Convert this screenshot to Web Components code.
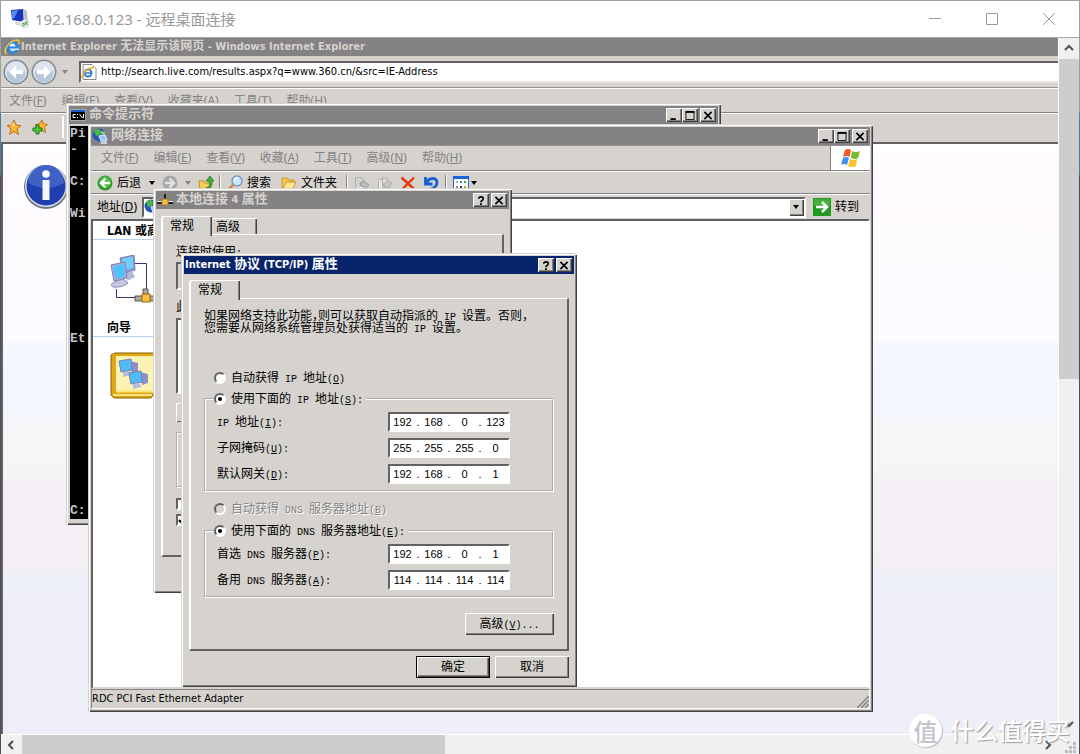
<!DOCTYPE html>
<html lang="zh-CN">
<head>
<meta charset="utf-8">
<meta name="viewport" content="width=device-width, initial-scale=1">
<title>192.168.0.123 - 远程桌面连接</title>
<style>
  body { margin: 0; font: 12px/16px "Noto Sans", "Noto Sans CJK SC", sans-serif; color: #000; }
</style>
</head>
<body>
<remote-desktop></remote-desktop>
<script>
const ICONS = {
  rdp: ['0 0 20 20', '<path d="M1 1l12-1 1 13-12-2z" fill="#1737b8"/><path d="M2 2l6-1-4 9-2-1z" fill="#5a8df0"/><path d="M13 0l4 2 1 12-4-1z" fill="#b9bec6"/><path d="M5 13l8 1 1 3-8-1z" fill="#d4d8de"/><circle cx="15" cy="15" r="4.500" fill="#e3e6e3"/><path d="M12.500 14l2 1.500-2 1.500M17.500 12.500l-2 1.500 2 1.500" stroke="#4da04a" fill="none" stroke-width="1.300"/>'],
  ie: ['0 0 16 16', '<circle cx="8.500" cy="8.500" r="6.500" fill="#2a86e0"/><path d="M5.500 7.500a3 3 0 016 0z" fill="#d8ecff"/><path d="M5.500 9.500h9.500v1.500h-3.500q-4 3-6-1.500z" fill="#d8ecff"/><path d="M2.500 15C-1.500 12 5 1 13.500 1c2 .2 2 2 .8 4" fill="none" stroke="#f6c22c" stroke-width="1.600"/>'],
  page: ['0 0 16 16', '<path d="M2 .5h9l4 4v11H2z" fill="#fff" stroke="#8a8a8a"/><circle cx="7" cy="9" r="3.500" fill="none" stroke="#2f7fd8" stroke-width="2"/><path d="M4 9h7" stroke="#2f7fd8" stroke-width="1.500"/><path d="M1 14C1 9 7 3 13 4" fill="none" stroke="#f0b020" stroke-width="1.500"/>'],
  left: ['0 0 26 26', '<circle cx="13" cy="13" r="12.500" fill="#7e8894"/><circle cx="13" cy="13" r="11" fill="#dfe4ea"/><circle cx="13" cy="14" r="9.500" fill="#b9c9dd"/><path d="M4 12a9 8 0 0118 0q-9 4-18 0" fill="#dce5f0"/><path d="M13 6.500l-7 6.500 7 6.500v-4.500h7v-4h-7z" fill="#fff"/>'],
  right: ['0 0 26 26', '<circle cx="13" cy="13" r="12.500" fill="#7e8894"/><circle cx="13" cy="13" r="11" fill="#dfe4ea"/><circle cx="13" cy="14" r="9.500" fill="#b9c9dd"/><path d="M4 12a9 8 0 0118 0q-9 4-18 0" fill="#dce5f0"/><path d="M13 6.500l7 6.500-7 6.500v-4.500H6v-4h7z" fill="#fff"/>'],
  star: ['0 0 16 16', '<path d="M8 1l2 5 5 .500-4 3.500 1.500 5.500L8 12.500 3.500 15.500 5 10 1 6.500 6 6z" fill="#ffb52b" stroke="#b8701a"/><path d="M8 3l1 4H5z" fill="#ffe08a"/>'],
  addstar: ['0 0 16 16', '<path d="M10 1l1.500 4 4 .500-3 3 1 5L9 11 5 12l1-4-3-2 4-1z" fill="#ffb52b" stroke="#b8701a"/><path d="M4 6h3v3h3v3H7v3H4v-3H1V9h3z" fill="#4cc63c" stroke="#20751a"/>'],
  cmd: ['0 0 16 14', '<path d="M0 1h16v12H0z" fill="#a8a8a8"/><path d="M1 2h14v2H1z" fill="#1c58c8"/><path d="M1 4h14v8H1z"/><path d="M5.500 6.500H3v3h2.500M7.500 6v1M7.500 9v1M9.500 6l3 4M13.500 6v4" stroke="#fff" fill="none"/>'],
  globe: ['0 0 16 16', '<circle cx="7" cy="7" r="6.500" fill="#2458b8"/><path d="M2 3q4-4 7 0l-1 4-4 1z" fill="#49b842"/><path d="M9 3l4 1v3l-4-1z" fill="#8ad070"/><path d="M7 8l6-1 2 5-6 1z" fill="#8fc8f5" stroke="#eef"/><path d="M8 14l7-1v3H9z" fill="#c9d3e8"/>'],
  lan: ['0 0 16 12', '<path d="M0 8h16v2H0z" fill="#222"/><path d="M0 7h16v1H0z" fill="#eee"/><path d="M7 0h2v6H7z" fill="#222"/><path d="M5 5h6v6H5z" fill="#f5c04c" stroke="#a87a14"/>'],
  back: ['0 0 16 16', '<circle cx="8" cy="8" r="7.500" fill="#2e9a2c"/><circle cx="8" cy="7" r="6" fill="#4dbb45"/><path d="M8.500 3.500L4 8l4.500 4.500M4 8h9" stroke="#fff" stroke-width="2.300" fill="none"/>'],
  fwd: ['0 0 16 16', '<circle cx="8" cy="8" r="7.500" fill="#a9a9a9"/><path d="M7.500 3.500L12 8l-4.500 4.500M12 8H3" stroke="#e4e4e4" stroke-width="2.300" fill="none"/>'],
  up: ['0 0 16 16', '<path d="M1 6h5l1 2h6v7H2z" fill="#f4cc58" stroke="#c48c1c"/><path d="M8 13q5-1 3-7h-3l4-5 4 5h-2q1 8-6 7z" fill="#3cb034" stroke="#1c701c" stroke-width=".7"/>'],
  search: ['0 0 16 16', '<path d="M1 15l5-5" stroke="#d98236" stroke-width="2.500"/><circle cx="10" cy="6" r="5" fill="#c4e8fb" stroke="#7897c8" stroke-width="1.500"/><path d="M7 5q2-3 4-2" stroke="#fff" fill="none" stroke-width="1.500"/>'],
  folder: ['0 0 16 16', '<path d="M1 3h5l1 2h6v3H5l-3 6H1z" fill="#f6c94f" stroke="#cf9526"/><path d="M5 7h10l-3 7H2z" fill="#fde58e" stroke="#cf9526"/>'],
  move: ['0 0 16 16', '<path d="M1.500 2.500h6l3 3v9h-9z" fill="#d0d0d0" stroke="#b0b0b0"/><path d="M3 12h6v2H3z" fill="#eee"/><path d="M6 8q3 1 3-2l6 4-5 5v-3q-4 0-4-4z" fill="#bdbdbd" stroke="#999"/>'],
  copy: ['0 0 16 16', '<path d="M1.500 4.500h5l2 2v8h-7z" fill="#e6e6e6" stroke="#b0b0b0"/><path d="M5 3h4l3 3v7H6z" fill="#d8d8d8" stroke="#aaa"/><path d="M6 9q3 1 3-2l2-2 4 3-4 6-2-2q-3 0-3-3z" fill="#c4c4c4" stroke="#a0a0a0" stroke-width=".7"/>'],
  del: ['0 0 16 16', '<path d="M1.500 2.500l13 12M14 2.500L2 14.500" stroke="#e8380d" stroke-width="2.400"/>'],
  undo: ['0 0 16 16', '<path d="M2.500 2v7h7M3 8.500C6 2 14 2 14 7.500c0 4-3 5.500-6 6.500" fill="none" stroke="#1a5fd0" stroke-width="2.800"/>'],
  views: ['0 0 16 14', '<path d="M0 0h16v14H0z" fill="#1a63d8"/><path d="M1 3h14v10H1z" fill="#fff"/><path d="M3 5h2v2H3z" fill="#aaa"/><path d="M3 10h2v2H3z" fill="#d65"/><path d="M7 5h2v2H7z" fill="#47b"/><path d="M7 10h2v2H7z" fill="#228"/><path d="M11 5h2v2h-2z" fill="#2a2"/><path d="M11 10h2v2h-2z" fill="#ba2"/>'],
  go: ['0 0 18 18', '<path d="M0 0h18v18H0z" fill="#229a22"/><path d="M1 1h16v7H1z" fill="#45b03e"/><path d="M9 4l5 5-5 5M14 9H3" stroke="#fff" stroke-width="2.500" fill="none"/>'],
  down: ['0 0 6 4', '<path d="M0 0h6L3 4z" fill="currentColor"/>'],
  flag: ['0 0 20 20', '<path d="M4 2q3-2 6 0L8.500 9Q6 7 2 9z" fill="#f05a28"/><path d="M11 3q4 2 8 0l-2 7q-3 2-7 0z" fill="#7cbb2c"/><path d="M2 10q3-2 6 0l-2 7q-3-2-6 0z" fill="#3f8ef0"/><path d="M9 11q4 2 7 0l-1 7q-4 2-8 0z" fill="#fcc42c"/>'],
  info: ['0 0 46 48', '<circle cx="23" cy="24" r="22" fill="#6f7686"/><circle cx="23" cy="23" r="21" fill="#d4dae8"/><circle cx="23" cy="23" r="19.500" fill="#1f3fae"/><path d="M5 20a18 18 0 0136 0q-18 10-36 0" fill="#3f60c4"/><circle cx="23" cy="11" r="3.800" fill="#fff"/><path d="M19.500 17h7v20h-7z" fill="#f4f6fb"/>'],
  netlan: ['0 0 44 48', '<path d="M25 8.500h11.500V35M6.500 34v8.500H26" stroke="#3d2f7a" fill="none"/><path d="M10 3l14-3 1 15-12 4z" fill="#8f94d6" stroke="#7c7fae"/><path d="M12 4l11-2.500v11.500l-10 3z" fill="#6fd0fb"/><path d="M17 18l5-2 3 6-8 4z" fill="#b6b8dc"/><path d="M1 10l14-3 2 16-13 3z" fill="#a8ace0" stroke="#7c7fae"/><path d="M3 11.500l11-2.500 1 12-9 3z" fill="#4fc0f8"/><path d="M7 26l6-2 5 4q-6 5-15 4-5-3 4-6z" fill="#c6c8e4" stroke="#8b8db0"/><path d="M33 34h5v7h6v5H25v-5h8z" fill="#a9a998" stroke="#55554a"/><path d="M32 39h8v8h-8z" fill="#fbbf3b" stroke="#94690f"/>'],
  wizard: ['0 0 44 48', '<path d="M1 3l4-2h39v40l-3 5H4l-3-3z" fill="#e0a818" stroke="#8a6208"/><path d="M6 4h38v35H6z" fill="#fdf3b0"/><path d="M6 39.500h38M3 43h39" stroke="#fbe27a" stroke-width="2"/><path d="M20 9l8 2v9l-6 2z" fill="#8d90c8"/><path d="M9 9l12-2 1 11-11 2z" fill="#50bdf5" stroke="#777db8"/><path d="M13 20l6-1 3 4-9 2z" fill="#b9bcdc"/><path d="M30 20l8 2v9l-6 2z" fill="#8d90c8"/><path d="M19 21l12-2 1 11-11 2z" fill="#50bdf5" stroke="#777db8"/><path d="M23 32l6-1 3 4-9 2z" fill="#b9bcdc"/>'],
  grip: ['0 0 12 12', '<path d="M0 12L12 0M4 12l8-8M8 12l4-4" stroke="#848284" stroke-width="1.500"/>'],
  min: ['0 0 12 12', '<path d="M0 5.500h12" stroke="#999"/>'],
  max: ['0 0 12 12', '<path d="M.5.5h11v11H.5z" stroke="#999" fill="none"/>'],
  close: ['0 0 12 12', '<path d="M0 0l12 12M12 0L0 12" stroke="#999"/>'],
  bmin: ['0 0 10 10', '<path d="M1 8h6v2H1z"/>'],
  bmax: ['0 0 10 10', '<path d="M.5 1h9v8.500h-9z" fill="none" stroke="#000"/><path d="M0 0h10v2H0z"/>'],
  bclose: ['0 0 10 10', '<path d="M1 1l8 8M9 1L1 9" stroke="#000" stroke-width="1.800"/>'],
  bhelp: ['0 0 10 10', '<path d="M2.500 3q0-2 2.500-2t2.500 2Q7.500 4.500 5 6v1" fill="none" stroke="#000" stroke-width="1.800"/><path d="M4 8h2v2H4z"/>'],
  chev: ['0 0 10 10', '<path d="M1 7l4-4 4 4" fill="none" stroke="#505050" stroke-width="2"/>'],
  dots: ['0 0 11 11', '<path d="M8 0h3v3H8zM4 4h3v3H4zM8 4h3v3H8zM0 8h3v3H0zM4 8h3v3H4zM8 8h3v3H8z" fill="#bdbdbd"/>']
};

const RESET = `
  *, *::before { box-sizing: border-box; }
  button { font: inherit; color: inherit; background: none; border: 0; padding: 0; margin: 0; display: flex; align-items: center; justify-content: center; white-space: nowrap; }
  input { font: inherit; color: inherit; border: 0; padding: 0; margin: 0; outline: 0; min-width: 0; background: none; }
  .l { font: 10px/1px "Liberation Mono", monospace; white-space: pre; }
`;
const CAPTION = 'bold 11px/16px "DejaVu Sans Condensed", "Noto Sans", "Noto Sans CJK SC", sans-serif';
const DIALOG = '11px/16px "DejaVu Sans Condensed", "Noto Sans", sans-serif';

/* Song-style labels: ideographs at 12px, ASCII runs in a 6px-wide monospace. */
const song = html => html.split(/(<[^>]+>)/).map(part =>
  part.startsWith('<') ? part : part.replace(/[\x20-\x7e]+/g, '<span class="l">$&</span>')).join('');
const keyed = text => song(text.replace(/\((\w)\)/, '(<u>$1</u>)'));
/* Captions set their ideographs larger than the Latin text. */
const caption = text => text.replace(/[\u4e00-\u9fff]+/g, '<span class="han">$&</span>');

function define(name, css, markup) {
  customElements.define(name, class extends HTMLElement {
    constructor() {
      super();
      this.attachShadow({ mode: 'open' });
    }
    connectedCallback() {
      if (this.shadowRoot.childNodes.length) return;
      const t = document.createElement('template');
      t.innerHTML = `<style>${RESET}${css}</style>` + (typeof markup === 'function' ? markup(this) : markup);
      this.shadowRoot.append(t.content.cloneNode(true));
    }
  });
}

define('ui-icon', `
  :host { display: block; flex: none; width: 16px; height: 16px; }
  svg { display: block; width: 100%; height: 100%; }
`, el => {
  const [box, body] = ICONS[el.getAttribute('name')];
  return `<svg viewBox="${box}" aria-hidden="true">${body}</svg>`;
});

define('menu-bar', `
  :host { display: flex; align-items: center; color: #848284; }
  nav { display: flex; gap: 15px; }
`, el => `<nav>${el.getAttribute('items').split(' ').map(i => {
  const [t, k] = i.split(':');
  return `<button type="button"><span>${t}(<u>${k}</u>)</span></button>`;
}).join('')}</nav>`);

define('classic-window', `
  :host { position: absolute; display: flex; flex-direction: column; padding: 3px; background: #d6d3ce;
    box-shadow: inset 1px 1px #d6d3ce, inset 2px 2px #fff, inset -1px -1px #424142, inset -2px -2px #848284; }
  header { display: flex; align-items: center; flex: none; height: 18px; padding: 0 2px 0 1px; gap: 3px; background: #848284; color: #d6d3ce; }
  :host([active]) header { background: #08246b; color: #fff; }
  h2 { flex: 1; margin: 0; font: ${CAPTION}; white-space: nowrap; }
  .han { font-size: 13px; line-height: 1px; }
  .buttons { display: flex; }
  .buttons button { width: 16px; height: 14px; color: #000; background: #d6d3ce; box-shadow: inset 1px 1px #fff, inset -1px -1px #424142, inset -2px -2px #848284; }
  .buttons button:last-child { margin-left: 2px; }
  .buttons ui-icon { width: 10px; height: 9px; }
  ::slotted(*) { min-width: 0; }
`, el => {
  const dialog = el.hasAttribute('dialog');
  const b = (n, t) => `<button type="button" aria-label="${t}"><ui-icon name="${n}"></ui-icon></button>`;
  return `<header><slot name="icon"></slot><h2>${caption(el.getAttribute('caption'))}</h2><div class="buttons">
    ${dialog ? b('bhelp', '帮助') : b('bmin', '最小化') + b('bmax', '最大化')}${b('bclose', '关闭')}</div></header><slot></slot>`;
});

define('tab-sheet', `
  :host { display: flex; flex-direction: column; }
  .tabs { display: flex; align-items: flex-end; height: 19px; flex: none; }
  button { height: 16px; padding: 0 17px 0 4px; border-top: 1px solid #fff; box-shadow: inset -1px 0 #424142, inset -2px 0 #848284; }
  button:first-child { height: 20px; padding: 0 18px 2px 7px; margin-bottom: -2px; background: #d6d3ce; border-left: 2px solid #fff; border-radius: 3px 0 0 0; position: relative; }
  .sheet { flex: 1; border: 1px solid #fff; border-left-width: 2px; border-right: 2px solid #636163; border-bottom: 2px solid #636163; padding: 11px 13px 12px; }
`, el => `<div class="tabs">${el.getAttribute('tabs').split(' ').map(t => `<button type="button">${t}</button>`).join('')}</div>
  <div class="sheet"><slot></slot></div>`);

define('radio-option', `
  :host { display: flex; align-items: center; height: 16px; }
  input { appearance: none; flex: none; width: 12px; height: 12px; border-radius: 50%; background: #fff; border: 2px solid; border-color: #636163 #fff #fff #636163; display: grid; place-items: center; }
  input:checked::before { content: ""; width: 4px; height: 4px; border-radius: 50%; background: #000; }
  input:disabled { background: #d6d3ce; }
  label { padding-left: 5px; white-space: nowrap; }
  :host([off]) { color: #848284; text-shadow: 1px 1px #fff; }
`, el => `<input type="radio" id="r" ${el.hasAttribute('on') ? 'checked' : ''} ${el.hasAttribute('off') ? 'disabled' : ''}>
  <label for="r">${keyed(el.getAttribute('text'))}</label>`);

define('ip-row', `
  :host { display: flex; align-items: center; height: 26px; }
  label { width: 171px; white-space: nowrap; }
  .field { display: flex; align-items: center; width: 122px; height: 20px; background: #fff; border: 2px solid; border-color: #636163 #fff #fff #636163; font: 11px/14px "Liberation Sans", sans-serif; }
  input { flex: 1; width: 0; text-align: center; }
  .dot { width: 6px; text-align: center; }
`, el => `<label for="a">${keyed(el.getAttribute('text'))}</label>
  <div class="field">${el.getAttribute('ip').split('.').map((v, i) => `<input ${i ? '' : 'id="a"'} aria-label="${v}" value="${v}">`).join('<span class="dot">.</span>')}</div>`);

define('push-button', `
  :host { display: block; }
  button { width: 100%; height: 22px; background: #d6d3ce; box-shadow: inset 1px 1px #fff, inset -1px -1px #424142, inset -2px -2px #848284; }
  :host([default]) button { border: 1px solid #000; }
`, el => `<button type="button"><span>${keyed(el.getAttribute('text'))}</span></button>`);

define('tcpip-form', `
  :host { flex: 1; display: flex; flex-direction: column; padding: 5px 5px 6px; }
  tab-sheet { flex: 1; }
  p { margin: 0 0 36px; line-height: 12px; white-space: nowrap; }
  .half { font-weight: 400; font-feature-settings: "halt"; }
  radio-option.free { margin: 0 10px; }
  fieldset { margin: 5px 0 9px; padding: 2px 8px 3px; border: 2px groove #fff; min-width: 0; }
  fieldset + radio-option + fieldset { margin: 6px 0 15px; }
  legend { padding: 0 3px 0 0; }
  fieldset ip-row { padding-left: 3px; }
  .adv { width: 89px; margin-left: auto; }
  footer { display: flex; justify-content: flex-end; gap: 5px; padding-top: 5px; }
  footer push-button { width: 74px; }
`, `
  <tab-sheet tabs="常规">
    <p>${song('如果网络支持此功能<b class="half">，</b>则可以获取自动指派的 IP 设置。否则，')}<br>${song('您需要从网络系统管理员处获得适当的 IP 设置。')}</p>
    <radio-option class="free" text="自动获得 IP 地址(O)"></radio-option>
    <fieldset>
      <legend><radio-option on text="使用下面的 IP 地址(S):"></radio-option></legend>
      <ip-row text="IP 地址(I):" ip="192.168.0.123"></ip-row>
      <ip-row text="子网掩码(U):" ip="255.255.255.0"></ip-row>
      <ip-row text="默认网关(D):" ip="192.168.0.1"></ip-row>
    </fieldset>
    <radio-option class="free" off text="自动获得 DNS 服务器地址(B)"></radio-option>
    <fieldset>
      <legend><radio-option on text="使用下面的 DNS 服务器地址(E):"></radio-option></legend>
      <ip-row text="首选 DNS 服务器(P):" ip="192.168.0.1"></ip-row>
      <ip-row text="备用 DNS 服务器(A):" ip="114.114.114.114"></ip-row>
    </fieldset>
    <push-button class="adv" text="高级(V)..."></push-button>
  </tab-sheet>
  <footer><push-button default text="确定"></push-button><push-button text="取消"></push-button></footer>
`);

define('connection-form', `
  :host { flex: 1; display: flex; flex-direction: column; padding: 6px 5px 33px; }
  tab-sheet { flex: 1; }
  .t { line-height: 12px; }
  .well { border: 2px solid; border-color: #636163 #fff #fff #636163; }
  .adapter { height: 28px; margin: 4px 0 11px; }
  .list { height: 76px; margin: 5px 0 9px; background: #fff; }
  .btn { width: 90px; height: 19px; box-shadow: inset 1px 1px #fff, inset -1px -1px #636163; }
  fieldset { height: 56px; margin: 10px 0 10px; border: 2px groove #fff; }
  input { appearance: none; display: block; width: 12px; height: 12px; margin-bottom: 4px; background: #fff; border: 2px solid; border-color: #636163 #fff #fff #636163; }
  input:checked::before { content: ""; display: block; width: 4px; height: 7px; margin: 0 2px; border: solid #000; border-width: 0 2px 2px 0; rotate: 40deg; }
`, `
  <tab-sheet tabs="常规 高级">
    <div class="t">${song('连接时使用:')}</div>
    <div class="well adapter"></div>
    <div class="t">此</div>
    <div class="well list"></div>
    <div class="btn"></div>
    <fieldset></fieldset>
    <input type="checkbox" aria-label="图标"><input type="checkbox" checked aria-label="通知">
  </tab-sheet>
`);

define('network-folder', `
  :host { flex: 1; display: flex; flex-direction: column; }
  .row { display: flex; align-items: center; flex: none; border-bottom: 1px solid #848284; box-shadow: 0 1px #fff; margin-bottom: 1px; }
  .menu { height: 26px; border-top: 1px solid #949294; padding-left: 10px; justify-content: space-between; }
  .logo { align-self: stretch; width: 40px; display: grid; place-items: center; background: #fff; border-left: 1px solid #848284; }
  .logo ui-icon { width: 20px; height: 20px; }
  .tools { height: 22px; padding-left: 6px; }
  .tools button { gap: 4px; }
  .drop { width: 6px; height: 4px; }
  .d1 { margin: 0 7px 0 8px; }
  .d2 { margin: 0 7px; color: #848284; }
  .d3 { margin-left: 2px; }
  .sep { width: 2px; height: 16px; border-left: 1px solid #848284; border-right: 1px solid #fff; margin: 0 6px 0 5px; }
  .tools button + button { margin: 0 4px 0 10px; }
  .mid { margin: 0 7px; }
  .undo { margin: 0 1px 0 7px; }
  .address { display: flex; align-items: center; height: 24px; padding: 0 11px 0 6px; flex: none; }
  .combo { flex: 1; display: flex; align-items: center; height: 21px; margin: 0 7px 0 5px; background: #fff; border: 2px solid; border-color: #636163 #fff #fff #636163; }
  .combo input { flex: 1; }
  .combo button { width: 15px; height: 17px; background: #d6d3ce; box-shadow: inset 1px 1px #fff, inset -1px -1px #424142, inset -2px -2px #848284; }
  .go { gap: 4px; }
  .go ui-icon { width: 18px; height: 18px; }
  main { flex: 1; background: #fff; border: 2px solid; border-color: #636163 #fff #d6d3ce #636163; padding-top: 2px; }
  section { width: 180px; height: 97px; }
  h3 { margin: 0 0 15px; height: 17px; padding: 0 14px; font: bold 12px/16px "DejaVu Sans Condensed", "Noto Sans CJK SC", sans-serif; border-bottom: 1px solid #b5cff0; }
  main ui-icon { width: 44px; height: 48px; margin-left: 17px; }
  footer { display: flex; align-items: center; justify-content: space-between; flex: none; height: 20px; border: 1px solid #848284; border-right-color: #fff; border-bottom-color: #fff; font: ${DIALOG}; }
  footer ui-icon { width: 12px; height: 12px; align-self: flex-end; }
`, `
  <div class="row menu"><menu-bar items="文件:F 编辑:E 查看:V 收藏:A 工具:T 高级:N 帮助:H"></menu-bar><div class="logo"><ui-icon name="flag"></ui-icon></div></div>
  <div class="row tools">
    <button type="button"><ui-icon name="back"></ui-icon>后退</button>
    <ui-icon class="drop d1" name="down"></ui-icon>
    <ui-icon name="fwd"></ui-icon>
    <ui-icon class="drop d2" name="down"></ui-icon>
    <ui-icon name="up"></ui-icon><i class="sep"></i>
    <button type="button"><ui-icon name="search"></ui-icon>搜索</button>
    <button type="button"><ui-icon name="folder"></ui-icon>文件夹</button>
    <i class="sep"></i>
    <ui-icon name="move"></ui-icon><ui-icon class="mid" name="copy"></ui-icon>
    <ui-icon name="del"></ui-icon><ui-icon class="undo" name="undo"></ui-icon>
    <i class="sep"></i><ui-icon name="views"></ui-icon>
    <ui-icon class="drop d3" name="down"></ui-icon>
  </div>
  <div class="address"><label for="addr">地址(<u>D</u>)</label>
    <div class="combo"><ui-icon name="globe"></ui-icon><input id="addr"><button type="button" aria-label="展开"><ui-icon class="drop" name="down"></ui-icon></button></div>
    <button type="button" class="go"><ui-icon name="go"></ui-icon>转到</button></div>
  <main>
    <section><h3>LAN 或高</h3><ui-icon name="netlan"></ui-icon></section>
    <section><h3>向导</h3><ui-icon name="wizard"></ui-icon></section>
  </main>
  <footer>RDC PCI Fast Ethernet Adapter<ui-icon name="grip"></ui-icon></footer>
`);

define('console-screen', `
  :host { flex: 1; display: block; margin: 2px 1px 3px; background: #000; color: #c6c3c6; font: bold 13px/16px "Liberation Mono", monospace; }
  pre { margin: 0; font: inherit; }
  pre:first-child { padding-top: 2px; }
  .gap { height: 16px; } .wide { height: 109px; } .last { height: 156px; }
`, `<pre>Pi</pre><pre>-</pre><div class="gap"></div><pre>C:</pre><div class="gap"></div><pre>Wi</pre><div class="wide"></div><pre>Et</pre><div class="last"></div><pre>C:</pre>`);

define('browser-window', `
  :host { display: flex; flex-direction: column; background: #d6d3ce; }
  header { display: flex; align-items: center; gap: 1px; height: 18px; padding-left: 3px; background: #848284; color: #d6d3ce; }
  h1 { margin: 0; font: ${CAPTION}; white-space: nowrap; }
  .han { font-size: 12px; line-height: 1px; }
  .nav { display: flex; align-items: center; height: 32px; padding-left: 2px; border-bottom: 1px solid #949294; box-shadow: 0 1px #fff; }
  .nav button ui-icon { width: 26px; height: 26px; margin-right: 2px; }
  .drop { width: 8px; height: 4px; color: #848284; margin: 0 10px 0 2px; }
  .url { flex: 1; display: flex; align-items: center; gap: 4px; height: 22px; background: #fff; border: 2px solid #636163; border-right: 0; border-bottom-color: #e7e3de; }
  .url input { flex: 1; font: ${DIALOG}; }
  menu-bar { height: 24px; margin-top: 1px; padding-left: 8px; border-bottom: 1px solid #848284; box-shadow: 0 1px #fff; }
  .fav { display: flex; align-items: center; gap: 10px; height: 29px; padding: 0 5px 2px; }
  .fav i { width: 2px; height: 22px; margin-left: 4px; background: #fff; }
  article { flex: 1; padding: 19px 20px; border: 2px solid #636163; border-width: 2px 0 0 2px;
    background: linear-gradient(#fff 8px, #fffbff 10px, #fdfbff 196px, #f8f8fb 199px, #f5f7ff 203px, #f4f6fe 266px, #f6f6f6 290px, #f5f5f5 330px, #f6f1f6 334px, #f4eff4 420px, #ecf0f6 430px, #eeeef8 460px); }
  article ui-icon { width: 46px; height: 48px; }
`, `
  <header><ui-icon name="ie"></ui-icon><h1>${caption('Internet Explorer 无法显示该网页 - Windows Internet Explorer')}</h1></header>
  <div class="nav"><button type="button" aria-label="后退"><ui-icon name="left"></ui-icon></button><button type="button" aria-label="前进"><ui-icon name="right"></ui-icon></button><ui-icon class="drop" name="down"></ui-icon>
    <div class="url"><ui-icon name="page"></ui-icon><input aria-label="地址" value="http://search.live.com/results.aspx?q=www.360.cn/&amp;src=IE-Address"></div></div>
  <menu-bar items="文件:F 编辑:E 查看:V 收藏夹:A 工具:T 帮助:H"></menu-bar>
  <div class="fav"><ui-icon name="star"></ui-icon><ui-icon name="addstar"></ui-icon><i></i></div>
  <article><ui-icon name="info"></ui-icon></article>
`);

define('scroll-strip', `
  :host { display: flex; background: #f0f0f0; }
  :host([vertical]) { flex-direction: column; border-left: 1px solid #fff; }
  :host(:not([vertical])) { border-top: 1px solid #fff; }
  button { flex: none; width: 20px; height: 20px; }
  .thumb { background: #cdcdcd; flex: none; }
  :host([vertical]) .thumb { height: 46%; margin-top: 1px; }
  :host(:not([vertical])) .thumb { width: 40%; margin-left: 1px; }
  .rest { flex: 1; }
  ui-icon { width: 10px; height: 10px; }
  .w { rotate: -90deg; } .e { rotate: 90deg; } .s { rotate: 180deg; }
`, el => {
  const v = el.hasAttribute('vertical');
  return `<button type="button" aria-label="${v ? '上' : '左'}"><ui-icon class="${v ? '' : 'w'}" name="chev"></ui-icon></button><div class="thumb"></div><div class="rest"></div>
    <button type="button" aria-label="${v ? '下' : '右'}"><ui-icon class="${v ? 's' : 'e'}" name="chev"></ui-icon></button>`;
});

define('water-mark', `
  :host { position: absolute; right: 10px; bottom: 9px; display: flex; align-items: center; gap: 8px; color: #fff; font: 500 24px/34px "Noto Sans CJK SC", sans-serif; text-shadow: 1px 1px 1px #999; pointer-events: none; }
  b { display: grid; place-items: center; width: 33px; height: 33px; border-radius: 50%; background: #fff; color: #c4c4cc; font-size: 24px; font-weight: 500; text-shadow: none; box-shadow: 1px 1px 1px #bbb; }
`, `<b>值</b><span>什么值得买</span>`);

define('remote-desktop', `
  :host { position: relative; display: flex; flex-direction: column; min-height: 100vh; padding: 1px; background: linear-gradient(#a0a0a0 112px, #4f7d9c 113px, #4f7d9c 174px, #4a4f57 176px); }
  .title { display: flex; align-items: center; flex: none; height: 36px; padding: 0 24px 0 9px; gap: 5px; background: #fff; color: #999; font-size: 15px; line-height: 20px; }
  .title > ui-icon { width: 20px; height: 20px; }
  .title span { flex: 1; }
  .title div { display: flex; gap: 45px; }
  .title button ui-icon { width: 12px; height: 12px; }
  .view { flex: 1; display: grid; grid-template-columns: 1fr 21px; grid-template-rows: 1fr 21px; border-top: 1px solid #a8a8a8; background: #f0f0f0; }
  .desk { position: relative; display: flex; overflow: hidden; }
  browser-window { flex: 1; min-width: 0; }
  .cmd { left: 65px; top: 65px; width: 655px; height: 422px; }
  .net { left: 87px; top: 86px; width: 785px; height: 588px; }
  .con { left: 152px; top: 150px; width: 359px; height: 405px; }
  .tcp { left: 180px; top: 215px; width: 396px; height: 434px; }
  .lan { height: 12px; }
  .corner { width: 11px; height: 11px; place-self: end; margin: 0 3px 2px 0; }
`, `
  <div class="title"><ui-icon name="rdp"></ui-icon><span>192.168.0.123 - 远程桌面连接</span>
    <div><button type="button" aria-label="最小化"><ui-icon name="min"></ui-icon></button><button type="button" aria-label="最大化"><ui-icon name="max"></ui-icon></button><button type="button" aria-label="关闭"><ui-icon name="close"></ui-icon></button></div></div>
  <div class="view">
    <div class="desk">
      <browser-window></browser-window>
      <classic-window class="cmd" caption="命令提示符"><ui-icon slot="icon" name="cmd"></ui-icon><console-screen></console-screen></classic-window>
      <classic-window class="net" caption="网络连接"><ui-icon slot="icon" name="globe"></ui-icon><network-folder></network-folder></classic-window>
      <classic-window class="con" dialog caption="本地连接 4 属性"><ui-icon slot="icon" class="lan" name="lan"></ui-icon><connection-form></connection-form></classic-window>
      <classic-window class="tcp" dialog active caption="Internet 协议 (TCP/IP) 属性"><tcpip-form></tcpip-form></classic-window>
    </div>
    <scroll-strip vertical></scroll-strip>
    <scroll-strip></scroll-strip>
    <ui-icon class="corner" name="dots"></ui-icon>
  </div>
  <water-mark></water-mark>
`);
</script>
</body>
</html>
